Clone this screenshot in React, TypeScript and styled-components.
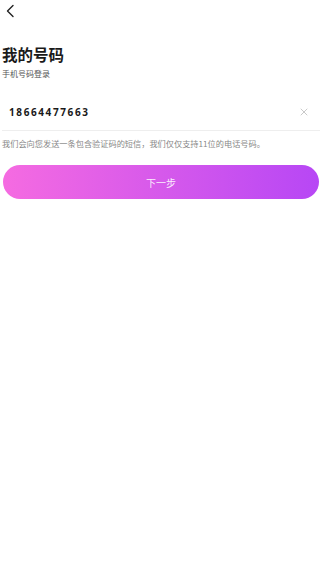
import React, { useState } from "react";
import styled, { createGlobalStyle } from "styled-components";

const GlobalStyle = createGlobalStyle`
  html, body {
    margin: 0;
    padding: 0;
    background: #ffffff;
  }
  body {
    font-family: "Noto Sans", "Noto Sans CJK SC", sans-serif;
  }
`;

function App() {
  const [phone, setPhone] = useState("18664477663");

  return (
    <Page>
      <GlobalStyle />
      <TopBar>
        <BackButton aria-label="back">
          <svg width="10" height="14" viewBox="0 0 10 14" fill="none">
            <path
              d="M8 1.5L2.5 7L8 12.5"
              stroke="#222"
              strokeWidth="1.4"
              strokeLinecap="round"
              strokeLinejoin="round"
            />
          </svg>
        </BackButton>
      </TopBar>

      <Header>
        <Title>我的号码</Title>
        <Subtitle>手机号码登录</Subtitle>
      </Header>

      <InputRow>
        <PhoneInput value={phone} onChange={(e) => setPhone(e.target.value)} />
        <ClearButton aria-label="clear" onClick={() => setPhone("")}>
          <svg width="8" height="8" viewBox="0 0 8 8" fill="none">
            <path d="M1 1L7 7M7 1L1 7" stroke="#c9c9c9" strokeWidth="1" strokeLinecap="round" />
          </svg>
        </ClearButton>
      </InputRow>

      <Hint>我们会向您发送一条包含验证码的短信，我们仅仅支持11位的电话号码。</Hint>

      <NextButton>下一步</NextButton>
    </Page>
  );
}

export default App;

const Page = styled.div`
  width: 320px;
  min-height: 562px;
  display: flex;
  flex-direction: column;
  background: #fff;
`;

const TopBar = styled.div`
  height: 22px;
  display: flex;
  align-items: center;
  padding-left: 3px;
`;

const BackButton = styled.button`
  border: none;
  background: none;
  padding: 0;
  width: 14px;
  height: 18px;
  display: flex;
  align-items: center;
  justify-content: center;
  cursor: pointer;
`;

const Header = styled.div`
  padding: 22px 2px 0;
  display: flex;
  flex-direction: column;
`;

const Title = styled.h1`
  margin: 0;
  font-size: 15.5px;
  line-height: 21px;
  font-weight: 700;
  color: #1a1a1a;
  font-family: "Noto Sans CJK SC", sans-serif;
`;

const Subtitle = styled.p`
  margin: 3px 0 0;
  font-size: 8px;
  line-height: 11px;
  color: #555;
  font-family: "Noto Sans CJK SC", sans-serif;
`;

const InputRow = styled.div`
  margin: 22px 0 0 2px;
  height: 30px;
  box-sizing: border-box;
  padding-bottom: 7px;
  display: flex;
  align-items: center;
  border-bottom: 1px solid #eeeeee;
`;

const PhoneInput = styled.input`
  flex: 1;
  border: none;
  outline: none;
  background: transparent;
  padding: 0 0 0 7px;
  font-family: "Noto Sans", sans-serif;
  font-size: 10px;
  font-weight: 700;
  letter-spacing: 1.6px;
  color: #1a1a1a;
  height: 20px;
`;

const ClearButton = styled.button`
  border: none;
  background: none;
  padding: 0;
  width: 8px;
  height: 8px;
  margin-right: 12px;
  display: flex;
  align-items: center;
  justify-content: center;
  cursor: pointer;
`;

const Hint = styled.p`
  margin: 6px 0 0 2px;
  font-size: 8.2px;
  line-height: 12px;
  color: #888;
  font-family: "Noto Sans CJK SC", sans-serif;
`;

const NextButton = styled.button`
  margin: 16px 1px 0 3px;
  height: 34px;
  border: none;
  border-radius: 17px;
  background: linear-gradient(90deg, #f56be1 0%, #b747f5 100%);
  color: rgba(255, 255, 255, 0.9);
  font-size: 10px;
  font-family: "Noto Sans CJK SC", sans-serif;
  cursor: pointer;
`;
